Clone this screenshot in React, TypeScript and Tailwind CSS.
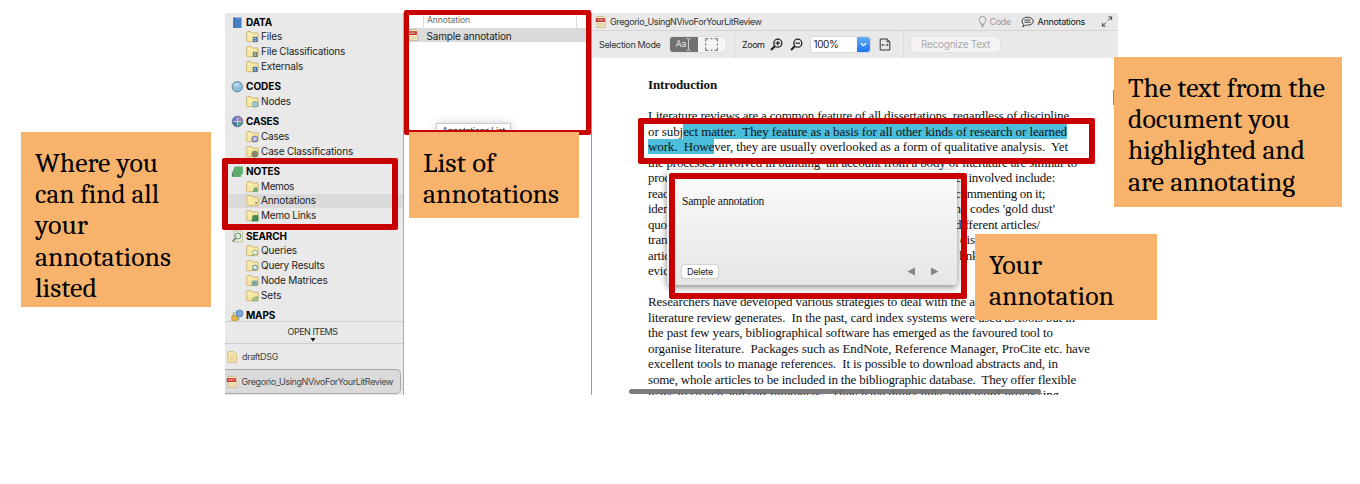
import { useLayoutEffect, useRef, type ReactNode } from "react";

/* Single line of text whose tracking is adjusted to fill a given measure. */
function Fit({ w, stretch = false, className = "", children }: { w: number; stretch?: boolean; className?: string; children: ReactNode }) {
  const ref = useRef<HTMLSpanElement>(null);
  useLayoutEffect(() => {
    const el = ref.current;
    if (!el) return;
    el.style.letterSpacing = "0px";
    el.style.transform = "none";
    const natural = el.getBoundingClientRect().width;
    const n = (el.textContent ?? "").length;
    if (stretch) el.style.transform = `scaleX(${w / natural})`;
    else el.style.letterSpacing = `${(w - natural) / n}px`;
  }, [w, stretch]);
  return (
    <span ref={ref} className={`inline-block origin-left whitespace-pre ${className}`}>
      {children}
    </span>
  );
}

type Kind = "file" | "grid" | "node" | "case" | "casegrid" | "memo" | "note" | "link" | "query" | "result" | "matrix" | "set";

function Folder({ kind }: { kind: Kind }) {
  return (
    <svg viewBox="0 0 13 13" className="h-[13px] w-[13px] shrink-0">
      <path d="M.7 2.5q0-1 1-1h3l1 1.5h5.500q.9 0 .9.9v7q0 .8-.8.8H1.500q-.8 0-.8-.8z" fill="#f6e7a4" stroke="#c9a95c" strokeWidth=".8" />
      <path d="M1.200 4.200h4.300l.8-1" fill="none" stroke="#fff8d8" strokeWidth=".8" />
      {(kind === "file" || kind === "grid") && (
        <>
          <rect x="6.800" y="6.800" width="4.700" height="5.200" fill={kind === "file" ? "#4775a8" : "#777b70"} />
          <path d="M8 8.500h2M8 10.300h2" stroke="#c9dcf0" strokeWidth=".8" />
        </>
      )}
      {kind === "node" && <circle cx="9.200" cy="9.300" r="2.800" fill="#9fcbd8" stroke="#628ea4" strokeWidth=".7" />}
      {(kind === "case" || kind === "casegrid") && (
        <>
          <circle cx="8.800" cy="9" r="3.100" fill={kind === "case" ? "#8796d0" : "#6f9a61"} stroke={kind === "case" ? "#656698" : "#668058"} strokeWidth=".6" />
          <path d="M8.800 7v4M6.800 9h4" stroke={kind === "case" ? "#f4e4ff" : "#a56a78"} strokeWidth=".9" />
        </>
      )}
      {kind === "memo" && <path d="M8 7.500h3.500v4.500H6.500z" fill="#6daa72" />}
      {kind === "note" && <path d="M9.500 7.500l2 1.500-2 1.500z" fill="#7b765c" />}
      {kind === "link" && <path d="M7 6.500h5v5.500H6z" fill="#438e50" stroke="#2f7740" strokeWidth=".6" />}
      {(kind === "query" || kind === "result") && (
        <>
          <circle cx="9" cy="8.500" r="2.400" fill="#e3f4e9" stroke={kind === "query" ? "#8da57a" : "#3f7390"} strokeWidth=".9" />
          <path d="M7.500 10.300L5.800 12" stroke="#6c8a71" strokeWidth="1" />
        </>
      )}
      {kind === "matrix" && (
        <>
          <rect x="5.500" y="6.500" width="6.500" height="5.500" fill="#9bc1b2" />
          <path d="M5.500 8.500H12M5.500 10.300H12M7.700 6.500V12M9.900 6.500V12" stroke="#5f8b85" strokeWidth=".6" />
        </>
      )}
      {kind === "set" && <path d="M6 11.800q0-4 5.500-4v4z" fill="#a5c982" stroke="#6f9b61" strokeWidth=".6" />}
    </svg>
  );
}

function GroupIcon({ name }: { name: string }) {
  return (
    <svg viewBox="0 0 13 13" className="h-[13px] w-[13px] shrink-0">
      {name === "DATA" && (
        <>
          <rect x="2.200" y="1.500" width="8.300" height="10.500" fill="#477fc5" />
          <path d="M3 1.500v10.500" stroke="#3969a8" strokeWidth="1" />
          <path d="M5 3h4" stroke="#6696d2" strokeWidth=".7" />
        </>
      )}
      {name === "CODES" && (
        <>
          <circle cx="6.300" cy="6.700" r="5.200" fill="#8ebcdc" stroke="#5f7f95" strokeWidth=".9" />
          <ellipse cx="5.500" cy="4.800" rx="3" ry="2" fill="#b0d3ea" />
        </>
      )}
      {name === "CASES" && (
        <>
          <path d="M6.500 6.500V1.100A5.400 5.400 0 0 0 1.100 6.500z" fill="#6f83c7" />
          <path d="M6.500 6.500V1.100A5.400 5.400 0 0 1 11.900 6.500z" fill="#b07ab5" />
          <path d="M6.500 6.500H1.100A5.400 5.400 0 0 0 6.500 11.900z" fill="#4e77a8" />
          <path d="M6.500 6.500h5.400A5.400 5.400 0 0 1 6.500 11.900z" fill="#56a08b" />
          <circle cx="6.500" cy="6.500" r="5.300" fill="none" stroke="#5b6690" strokeWidth=".8" />
          <path d="M6.500 3v7M3 6.500h7" stroke="#ddd0ea" strokeWidth=".9" />
        </>
      )}
      {name === "NOTES" && (
        <>
          <path d="M3.800 1.500h8v7l-2 3.500H1.500z" fill="#5aae6d" />
          <path d="M3.800 1.500L1.500 12l-.8-2.500z" fill="#356d48" />
          <path d="M9.800 12l.3-3h1.700z" fill="#b9e2bd" />
        </>
      )}
      {name === "SEARCH" && (
        <>
          <path d="M3 .8h6.500l2 2v9H3z" fill="#edf2d9" stroke="#a8ae86" strokeWidth=".7" />
          <circle cx="7" cy="6" r="3" fill="#d1ecd8" stroke="#6c9273" strokeWidth="1" />
          <path d="M4.800 8.300L1.500 11.500" stroke="#6b7f61" strokeWidth="1.500" />
        </>
      )}
      {name === "MAPS" && (
        <>
          <rect x=".8" y="6.500" width="6" height="5.500" rx=".8" fill="#e7b53d" stroke="#ba8722" strokeWidth=".6" />
          <path d="M2.300 6.500V5q0-1.500 1.500-1.500" fill="none" stroke="#c8983c" strokeWidth="1.200" />
          <circle cx="8.400" cy="4.500" r="3.500" fill="#78a9db" stroke="#4d77a8" strokeWidth=".8" />
          <path d="M6.500 8l2 3" stroke="#8795a6" strokeWidth="1" />
        </>
      )}
    </svg>
  );
}

function Pdf() {
  return (
    <svg viewBox="0 0 12 12" className="h-[12px] w-[12px] shrink-0">
      <path d="M2 .5h6.500l2 2v9H2z" fill="#f6ebc6" stroke="#c3a878" strokeWidth=".7" />
      <rect x=".8" y="2.300" width="9" height="3.700" rx=".4" fill="#c5281c" />
      <path d="M2.300 4.100h6" stroke="#fff" strokeWidth="1" strokeDasharray="1.600 .5" />
      <path d="M3.500 8h5.500M3.500 9.800h5.500" stroke="#d7be8e" strokeWidth=".8" />
    </svg>
  );
}

const groups: { name: string; w: number; items: [string, Kind, number][] }[] = [
  { name: "DATA", w: 26, items: [["Files", "file", 21], ["File Classifications", "grid", 84], ["Externals", "file", 42]] },
  { name: "CODES", w: 35, items: [["Nodes", "node", 30]] },
  { name: "CASES", w: 33, items: [["Cases", "case", 28], ["Case Classifications", "casegrid", 92]] },
  { name: "NOTES", w: 34, items: [["Memos", "memo", 33], ["Annotations", "note", 55], ["Memo Links", "link", 55]] },
  { name: "SEARCH", w: 41, items: [["Queries", "query", 36], ["Query Results", "result", 63.5], ["Node Matrices", "matrix", 66.5], ["Sets", "set", 20.5]] },
  { name: "MAPS", w: 29, items: [] },
];

function Sidebar() {
  return (
    <aside className="flex h-full w-[179px] shrink-0 flex-col border-r border-[#a9a9a9] bg-[#e9e9e9] text-[#1c1c1c]">
      <div className="flex h-[308px] shrink-0 flex-col gap-[6px] overflow-hidden pt-[2.300px]">
        {groups.map((g) => (
          <section key={g.name}>
            <div className="flex h-[14px] items-center gap-[2.500px] pl-[5.500px] text-[10px] font-bold text-black">
              <GroupIcon name={g.name} />
              <Fit w={g.w}>{g.name}</Fit>
            </div>
            {g.items.map(([label, kind, w]) => (
              <div key={label} className={`flex h-[14.900px] items-center gap-[2.500px] pl-[20.500px] text-[10px] ${label === "Annotations" ? "bg-[#dadada]" : ""}`}>
                <Folder kind={kind} />
                <Fit w={w}>{label}</Fit>
              </div>
            ))}
          </section>
        ))}
      </div>
      <div className="flex h-[23px] shrink-0 flex-col items-center border-y border-[#cdcdcd] pr-[3px] pt-[3px] text-[9px] leading-[13px] text-[#333]">
        <Fit w={50}>OPEN ITEMS</Fit>
        <svg viewBox="0 0 6 4" className="h-[4px] w-[6px]"><path d="M.5 0h5L3 3.800z" fill="#111" /></svg>
      </div>
      <div className="flex h-[25px] shrink-0 items-center gap-[4px] pl-[2px] text-[9px] text-[#444]">
        <svg viewBox="0 0 11 12" className="h-[12px] w-[11px]">
          <path d="M1 .7h6l2.500 2.500v8.200H1z" fill="#f5e9b4" stroke="#c6ae6b" strokeWidth=".8" />
          <path d="M3 5h4.500M3 7h4.500M3 9h4.500" stroke="#d0bb7c" strokeWidth=".8" />
        </svg>
        <Fit w={36}>draftDSG</Fit>
      </div>
      <div className="mr-[2px] flex h-[25px] shrink-0 items-center gap-[3.500px] rounded-r-[5px] border border-l-0 border-[#aaa] bg-[#dadada] pl-[1px] text-[9px] text-[#444]">
        <Pdf />
        <Fit w={151.500}>Gregorio_UsingNVivoForYourLitReview</Fit>
      </div>
    </aside>
  );
}

function AnnotationList() {
  return (
    <section className="flex h-full w-[188px] shrink-0 flex-col border-r border-[#999] bg-white">
      <div className="flex h-[15px] items-center pl-[19px]">
        <div className="mr-[14px] flex h-[15px] grow items-center border-x border-[#ddd] pl-[3px] text-[8.500px] text-[#666]">
          <Fit w={43}>Annotation</Fit>
        </div>
      </div>
      <div className="flex h-[14px] items-center gap-[7.500px] bg-[#dadada] pl-[3px] text-[10px] text-[#222]">
        <Pdf />
        <Fit w={85} className="translate-y-[1px]">Sample annotation</Fit>
      </div>
      <div className="ml-[32px] mt-[81px] h-[14px] w-[75px] border border-[#ccc] bg-white pl-[5px] text-[9px] leading-[14px] text-[#333] shadow-[0_0_8px_rgba(0,0,0,.2)]">
        <Fit w={63}>Annotations List</Fit>
      </div>
    </section>
  );
}

function Magnifier({ plus }: { plus: boolean }) {
  return (
    <svg viewBox="0 0 13 13" className="h-[13px] w-[13px]" fill="none" stroke="#222">
      <circle cx="7.800" cy="5.200" r="4" strokeWidth="1.300" />
      <path d="M4.800 8.300L1 12" strokeWidth="2.200" />
      <path d={plus ? "M5.600 5.200h4.400M7.800 3v4.400" : "M5.600 5.200h4.400"} strokeWidth="1.200" />
    </svg>
  );
}

function Toolbar() {
  return (
    <header className="h-[45px] shrink-0 bg-[#e9e9e9] text-[9px] text-[#333]">
      <div className="flex h-[18px] items-center border-b border-[#d4d4d4] pl-[2.500px] pr-[5px]">
        <Pdf />
        <Fit w={151.500} className="ml-[3.500px]">Gregorio_UsingNVivoForYourLitReview</Fit>
        <div className="ml-auto flex items-center">
          <svg viewBox="0 0 10 12" className="mr-[3px] h-[12px] w-[9px]" fill="none" stroke="#888" strokeWidth=".9">
            <path d="M3.300 8.500Q3.300 7 2 5.800a3.800 3.800 0 1 1 6 0Q6.700 7 6.700 8.500zM3.500 10h3M4.200 11.400h1.600" />
          </svg>
          <Fit w={21} className="text-[#999]">Code</Fit>
          <svg viewBox="0 0 13 12" className="ml-[10px] mr-[4px] h-[12px] w-[13px]" fill="none" stroke="#222" strokeWidth=".9">
            <path d="M2.500 8.300C-.5 5.500 1.300 1.200 6.600 1.200c7.500 0 7.500 8 0 8q-1 0-2-.3Q3.500 10.600 1.700 10.700q1-.9.8-2.400zM3.500 4h6M3.500 6.200h6" />
          </svg>
          <Fit w={47.500} className="text-[#111]">Annotations</Fit>
          <svg viewBox="0 0 12 12" className="ml-[16px] h-[11px] w-[12px]" fill="none" stroke="#333" strokeWidth="1">
            <path d="M7 5l4-4M7.500 1H11v3.500M5 7l-4 4M1 7.500V11h3.500" />
          </svg>
        </div>
      </div>
      <div className="flex h-[27px] items-center pl-[7px]">
        <Fit w={61.500}>Selection Mode</Fit>
        <div className="ml-[9px] flex h-[15px] w-[56px] overflow-hidden rounded-[3px] bg-[#f5f5f5] shadow-[0_0_1px_rgba(0,0,0,.35)]">
          <div className="flex w-[28px] items-center justify-center bg-[#717171] text-[8.500px] text-[#e5e5e5]">
            <span>Aa</span>
            <svg viewBox="0 0 5 13" className="h-[13px] w-[5px]" fill="none" stroke="#e5e5e5" strokeWidth=".8">
              <path d="M.5.5q2 0 2 1v10q0 1-2 1M4.500.5q-2 0-2 1M2.500 11.500q0 1 2 1" />
            </svg>
          </div>
          <div className="flex w-[27px] items-center justify-center">
            <svg viewBox="0 0 13 13" className="h-[13px] w-[13px]" fill="none" stroke="#555" strokeWidth=".9">
              <path d="M.7 3.500V.7h2.800M9.500.7h2.800v2.800M12.300 9.500v2.800H9.500M3.500 12.300H.7V9.500M5.500.7h2M5.500 12.300h2M.7 5.500v2M12.300 5.500v2" />
            </svg>
          </div>
        </div>
        <div className="ml-[8px] h-[27px] border-l border-[#dadada]" />
        <Fit w={22.500} className="ml-[7.500px] text-[#222]">Zoom</Fit>
        <div className="ml-[5.500px] flex gap-[6.500px]">
          <Magnifier plus />
          <Magnifier plus={false} />
        </div>
        <div className="ml-[8.500px] flex h-[15px] w-[59px] items-center bg-white pl-[2.500px] text-[10px] text-[#222] shadow-[0_0_1px_rgba(0,0,0,.4)]">
          <Fit w={25}>100%</Fit>
          <div className="ml-auto flex h-[15px] w-[13px] items-center justify-center rounded-r-[3px] bg-linear-to-b from-[#63aef8] to-[#1774ee]">
            <svg viewBox="0 0 8 6" className="h-[5px] w-[7px]" fill="none" stroke="#fff" strokeWidth="1.400"><path d="M1 1.500l3 3 3-3" /></svg>
          </div>
        </div>
        <svg viewBox="0 0 12 13" className="ml-[9px] h-[13px] w-[12px]" fill="none" stroke="#333" strokeWidth="1">
          <path d="M1.200 1h7l2.600 2.600V12H1.200zM8 1v2.800h2.800" />
          <path d="M2.500 7h2M5.400 7h1.200M7.500 7h2M3.700 5.900v2.200M8.300 5.900v2.200" strokeWidth=".8" />
        </svg>
        <div className="ml-[11.500px] h-[27px] border-l border-[#dadada]" />
        <div className="ml-[7.500px] flex h-[15px] w-[89px] items-center rounded-[3px] bg-[#f3f3f3] pl-[10px] text-[10px] text-[#aaa] shadow-[0_0_1px_rgba(0,0,0,.3)]">
          <Fit w={69}>Recognize Text</Fit>
        </div>
      </div>
    </header>
  );
}

function Split({ left, right, w, rw }: { left: string; right: string; w: number; rw: number }) {
  return (
    <div className="flex justify-between" style={{ width: w }}>
      <span className="tracking-[-0.250px]">{left}</span>
      <span className="flex" style={{ width: rw }}><Fit w={rw}>{right}</Fit></span>
    </div>
  );
}

function DocumentPage() {
  return (
    <div className="h-[337px] overflow-hidden bg-white pl-[56px] pt-[18.500px] font-['Liberation_Serif',serif] text-[13px] leading-[15.500px] text-[#111]">
      <h1 className="font-bold leading-[15.500px]"><Fit w={69}>Introduction</Fit></h1>
      <div className="mt-[16.400px] [&>*]:h-[15.500px] [&>*]:whitespace-pre">
        <div><Fit w={421}>Literature reviews are a common feature of all dissertations, regardless of discipline</Fit></div>
        <div><Fit w={419}>or subj<mark className="bg-[#4bbedc] text-inherit">ect matter.  They feature as a basis for all other kinds of research or learned</mark></Fit></div>
        <div><Fit w={420}><mark className="bg-[#4bbedc] text-inherit">work.  Howe</mark>ver, they are usually overlooked as a form of qualitative analysis.  Yet</Fit></div>
        <div><Fit w={429}>the processes involved in building  an account from a body of literature are similar to</Fit></div>
        <Split left="producing any other form" right="Stages involved include:" w={407} rw={122} />
        <Split left="reading" right="commenting on it;" w={397} rw={90} />
        <Split left="identifying" right="the codes 'gold dust'" w={407} rw={104} />
        <Split left="quotes" right="different articles/" w={392} rw={85} />
        <Split left="transfer" right="dissertation" w={371} rw={59} />
        <Split left="articles" right="linking" w={346} rw={35} />
        <div className="tracking-[-0.250px]">evidence</div>
        <div />
        <div><Fit w={427}>Researchers have developed various strategies to deal with the amount of material a</Fit></div>
        <div><Fit w={427}>literature review generates.  In the past, card index systems were used as tools but in</Fit></div>
        <div><Fit w={405}>the past few years, bibliographical software has emerged as the favoured tool to</Fit></div>
        <div><Fit w={442}>organise literature.  Packages such as EndNote, Reference Manager, ProCite etc. have</Fit></div>
        <div><Fit w={410}>excellent tools to manage references.  It is possible to download abstracts and, in</Fit></div>
        <div><Fit w={428}>some, whole articles to be included in the bibliographic database.  They offer flexible</Fit></div>
        <div><Fit w={411}>ways to search and sort references.  They have direct links with word-processing</Fit></div>
      </div>
    </div>
  );
}

function Callout({ place, lines }: { place: string; lines: [string, number][] }) {
  return (
    <div className={`absolute bg-[#f7b26c] pl-[14px] pt-[15.500px] font-['Cambria','Liberation_Serif',serif] text-[27px] leading-[31.400px] text-black ${place}`}>
      {lines.map(([t, w]) => (
        <div key={t} className="h-[31.400px]"><Fit w={w} stretch>{t}</Fit></div>
      ))}
    </div>
  );
}

function Outline({ place }: { place: string }) {
  return <div className={`absolute rounded-[2px] border-[#c80000] ${place}`} />;
}

export default function App() {
  return (
    <main className="relative h-[484px] w-[1360px] overflow-hidden bg-white pl-[225px] pt-[13px] font-['Inter','Liberation_Sans',sans-serif]">
      <div className="flex h-[382px] w-[893px] overflow-hidden">
        <Sidebar />
        <AnnotationList />
        <section className="flex h-full min-w-0 grow flex-col">
          <Toolbar />
          <DocumentPage />
        </section>
      </div>

      <div className="absolute left-[629px] top-[389px] h-[5px] w-[412px] rounded-[3px] bg-[#6f6f6f]/90" />
      <div className="absolute left-[1113px] top-[90px] h-[15px] w-[4px] bg-[#888]" />

      <div className="absolute left-[667px] top-[170px] flex h-[115px] w-[290px] flex-col justify-between rounded-[4px] bg-linear-to-b from-[#fbfbfb] to-[#e6e6e6] pb-[7px] pl-[15px] pr-[18px] pt-[24px] shadow-[0_2px_7px_rgba(0,0,0,.5)]">
        <div className="font-['Liberation_Serif',serif] text-[11.500px] leading-[15px] text-[#111]"><Fit w={82}>Sample annotation</Fit></div>
        <div className="flex items-center justify-between">
          <button className="flex h-[13px] w-[36px] items-center rounded-[2px] bg-white pl-[5px] text-[9px] text-[#222] shadow-[0_0_1.500px_rgba(0,0,0,.5)]"><Fit w={26}>Delete</Fit></button>
          <svg viewBox="0 0 32 9" className="h-[9px] w-[32px]" fill="#858585"><path d="M8 .5v8L.5 4.500zM24 .5v8l7.500-4z" /></svg>
        </div>
      </div>

      <Outline place="left-[222px] top-[158px] h-[72px] w-[176px] border-[6px]" />
      <Outline place="left-[404px] top-[10px] h-[125px] w-[187px] border-[5px]" />
      <Outline place="left-[638px] top-[118px] h-[46px] w-[457px] border-[6px]" />
      <Outline place="left-[669px] top-[173px] h-[126px] w-[298px] border-[6px]" />

      <Callout place="left-[21px] top-[132px] h-[175px] w-[190px]" lines={[["Where you", 123], ["can find all", 124], ["your", 53], ["annotations", 136], ["listed", 62]]} />
      <Callout place="left-[409px] top-[132px] h-[86px] w-[170px]" lines={[["List of", 72], ["annotations", 136]]} />
      <Callout place="left-[1114px] top-[57px] h-[150px] w-[228px]" lines={[["The text from the", 197], ["document you", 162], ["highlighted and", 177], ["are annotating", 167]]} />
      <Callout place="left-[975px] top-[234px] h-[86px] w-[182px]" lines={[["Your", 53], ["annotation", 125]]} />
    </main>
  );
}
